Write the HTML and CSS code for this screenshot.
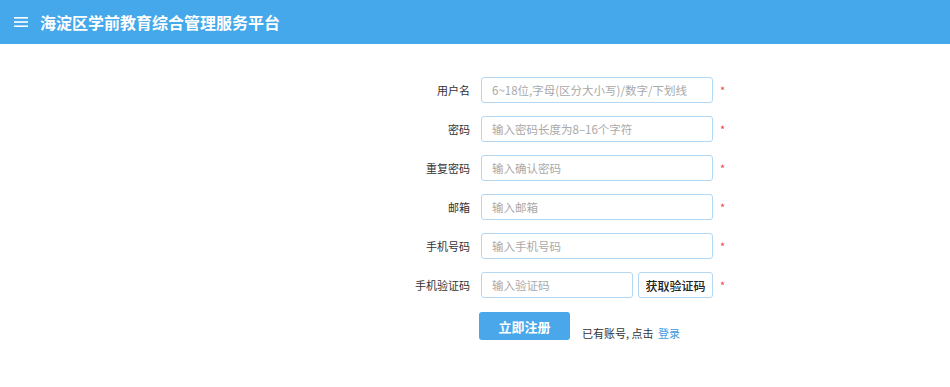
FILE: index.html
```html
<!DOCTYPE html>
<html lang="zh-CN">
<head>
    <meta charset="UTF-8">
    <title>海淀区学前教育综合管理服务平台 - 注册</title>
    <link rel="stylesheet" href="styles.css">
</head>
<body>
    <header class="topbar">
        <span class="menu-icon">
            <svg width="14" height="12" viewBox="0 0 14 12">
                <rect x="0" y="1" width="14" height="1.6" fill="#fff"/>
                <rect x="0" y="5.2" width="14" height="1.6" fill="#fff"/>
                <rect x="0" y="9.4" width="14" height="1.6" fill="#fff"/>
            </svg>
        </span>
        <h1 class="title">海淀区学前教育综合管理服务平台</h1>
    </header>

    <form class="register">
        <div class="row">
            <label>用户名</label>
            <input type="text" placeholder="6~18位,字母(区分大小写)/数字/下划线">
            <span class="req">*</span>
        </div>
        <div class="row">
            <label>密码</label>
            <input type="password" placeholder="输入密码长度为8–16个字符">
            <span class="req">*</span>
        </div>
        <div class="row">
            <label>重复密码</label>
            <input type="password" placeholder="输入确认密码">
            <span class="req">*</span>
        </div>
        <div class="row">
            <label>邮箱</label>
            <input type="text" placeholder="输入邮箱">
            <span class="req">*</span>
        </div>
        <div class="row">
            <label>手机号码</label>
            <input type="text" placeholder="输入手机号码">
            <span class="req">*</span>
        </div>
        <div class="row">
            <label>手机验证码</label>
            <div class="code-group">
                <input type="text" placeholder="输入验证码">
                <button type="button" class="code-btn">获取验证码</button>
            </div>
            <span class="req">*</span>
        </div>
        <div class="actions">
            <button type="button" class="submit">立即注册</button>
            <span class="login-tip">已有账号, 点击 <a href="#">登录</a></span>
        </div>
    </form>
</body>
</html>
```

FILE: styles.css
```css
body {
    margin: 0;
    font-family: "Noto Sans CJK SC", "Noto Sans", sans-serif;
    color: #333;
    background: #fff;
}
.topbar {
    height: 44px;
    background: #45a8ea;
    display: flex;
    align-items: center;
    padding-left: 14px;
    box-sizing: border-box;
}
.menu-icon {
    display: flex;
    width: 14px;
    margin-right: 12px;
}
.title {
    margin: 0;
    font-size: 16px;
    font-weight: bold;
    color: #fff;
}
.register {
    margin: 33px 0 0 390px;
    display: flex;
    flex-direction: column;
    gap: 13px;
}
.row {
    display: flex;
    align-items: center;
    height: 26px;
}
.row label {
    width: 80px;
    text-align: right;
    font-size: 11px;
    color: #333;
    margin-right: 11px;
}
.row input {
    width: 232px;
    height: 26px;
    box-sizing: border-box;
    border: 1px solid #b3d8f3;
    border-radius: 3px;
    padding: 0 10px;
    font-family: inherit;
    font-size: 11.5px;
    color: #333;
    outline: none;
}
.row input::placeholder {
    color: #a9a9a9;
}
.req {
    color: #e8464e;
    font-size: 11px;
    margin-left: 7px;
}
.code-group {
    display: flex;
    width: 232px;
    gap: 5px;
}
.code-group input {
    width: 152px;
}
.code-btn {
    width: 75px;
    height: 26px;
    border: 1px solid #b3d8f3;
    border-radius: 3px;
    background: #fff;
    font-family: inherit;
    font-size: 12px;
    font-weight: 500;
    color: #222;
    padding: 0;
}
.actions {
    display: flex;
    align-items: flex-end;
    margin-left: 89px;
    margin-top: 1px;
}
.submit {
    width: 91px;
    height: 28px;
    border: none;
    border-radius: 3px;
    background: #4aa8ea;
    color: #fff;
    font-family: inherit;
    font-size: 13px;
    font-weight: bold;
    padding: 0;
}
.login-tip {
    margin-left: 12px;
    font-size: 11px;
    color: #333;
    line-height: 14px;
    margin-bottom: 0;
}
.login-tip a {
    color: #3d9ce0;
    text-decoration: none;
    margin-left: 2px;
}
```
